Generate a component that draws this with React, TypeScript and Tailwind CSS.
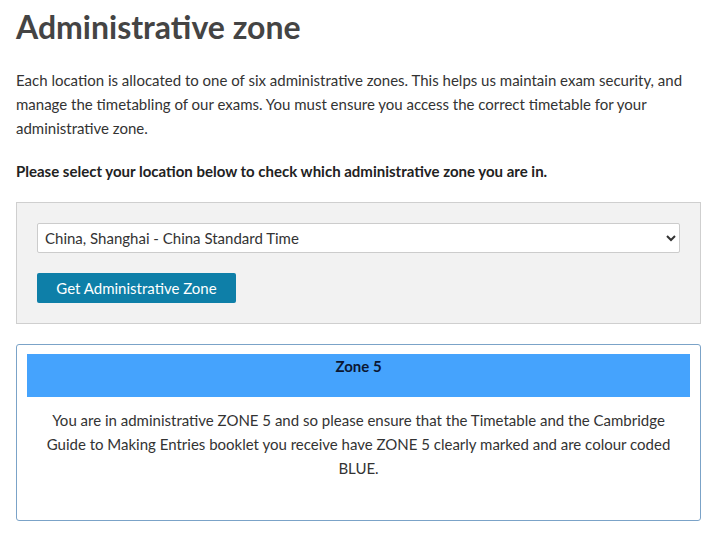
import { useState } from 'react';

const zones = [
  'China, Shanghai - China Standard Time',
  'China, Beijing - China Standard Time',
  'Hong Kong - Hong Kong Time',
];

export default function App() {
  const [location, setLocation] = useState(zones[0]);

  return (
    <div className="min-h-screen bg-white px-4 pt-[7px] text-[#333] [font-family:Lato,'Noto_Sans',sans-serif]">
      <h1 className="text-[32px] font-bold leading-[40px] text-[#444]">Administrative zone</h1>

      <p className="mt-[21px] whitespace-nowrap text-[15px] leading-6">
        Each location is allocated to one of six administrative zones. This helps us maintain exam security, and
        <br />
        manage the timetabling of our exams. You must ensure you access the correct timetable for your
        <br />
        administrative zone.
      </p>

      <p className="mt-[19px] text-[15px] font-bold leading-6 text-[#222]">
        Please select your location below to check which administrative zone you are in.
      </p>

      {/* location picker */}
      <div className="mt-[19px] w-[685px] border border-[#cfcfcf] bg-[#f2f2f2] px-5 pt-5 pb-5">
        <select
          value={location}
          onChange={(e) => setLocation(e.target.value)}
          className="block h-[30px] w-[643px] rounded-[2px] border border-[#cccccc] bg-white pl-[3px] text-[15px] text-[#333]"
        >
          {zones.map((z) => (
            <option key={z}>{z}</option>
          ))}
        </select>
        <button className="mt-5 h-[30px] w-[199px] rounded-[2px] bg-[#0e7fa8] text-[15px] text-white">
          Get Administrative Zone
        </button>
      </div>

      {/* result */}
      <div className="mt-5 w-[685px] rounded-[3px] border border-[#7ba3c8] px-[10px] pt-[9px] pb-[40px]">
        <div className="h-[43px] bg-[#45a3fd] pt-[1px] text-center text-[15px] font-bold text-[#0b1733]">Zone 5</div>
        <p className="mt-[11px] px-4 text-center text-[15px] leading-6 text-[#333]">
          You are in administrative ZONE 5 and so please ensure that the Timetable and the Cambridge
          <br />
          Guide to Making Entries booklet you receive have ZONE 5 clearly marked and are colour coded
          <br />
          BLUE.
        </p>
      </div>
    </div>
  );
}
